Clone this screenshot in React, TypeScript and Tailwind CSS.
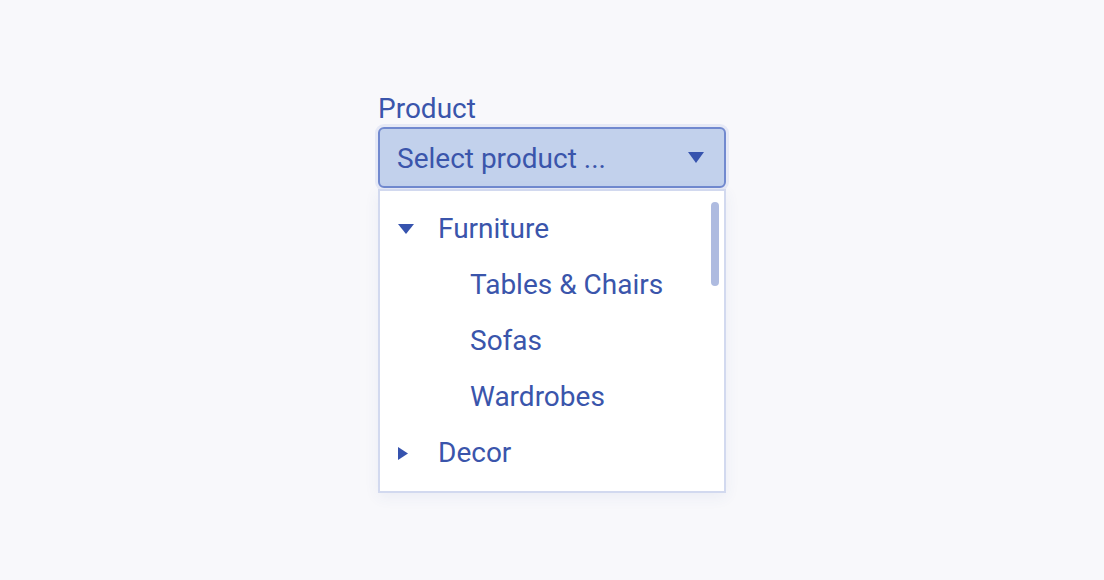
import React from "react";

const font = { fontFamily: "Roboto, 'Noto Sans', sans-serif" };

function Caret({ open }: { open: boolean }) {
  return open ? (
    <svg width="16" height="10" viewBox="0 0 16 10" className="shrink-0">
      <path d="M0 0H16L8 10Z" fill="#3653ae" />
    </svg>
  ) : (
    <svg width="10" height="13" viewBox="0 0 10 13" className="shrink-0">
      <path d="M0 0L10 6.5L0 13Z" fill="#3653ae" />
    </svg>
  );
}

const rows = [
  { label: "Furniture", group: true, open: true },
  { label: "Tables & Chairs" },
  { label: "Sofas" },
  { label: "Wardrobes" },
  { label: "Decor", group: true, open: false },
];

export default function App() {
  return (
    <div
      className="min-h-[580px] w-full bg-[#f8f8fb] flex justify-center pt-[93px] text-[#3a55ab]"
      style={font}
    >
      <div className="w-[348px] flex flex-col">
        <label className="text-[28px] leading-[32px]">Product</label>
        <button className="mt-[2px] h-[61px] flex items-center justify-between pl-[17px] pr-[20px] pt-[2px] rounded-[6px] border-2 border-[#7189cf] bg-[#c2d1ec] shadow-[0_0_0_3px_#e6e9f6] text-[28px] text-[#3a55ab]">
          <span>Select product ...</span>
          <svg width="16" height="11" viewBox="0 0 16 11" className="-mt-[2px]">
            <path d="M0 0H16L8 11Z" fill="#3653ae" />
          </svg>
        </button>
        <div className="relative mt-px border-2 border-[#d2d9ef] bg-white py-[10px] shadow-[0_4px_14px_rgba(60,80,150,0.07)]">
          <ul>
            {rows.map((r) =>
              r.group ? (
                <li key={r.label} className="h-[56px] flex items-center text-[28px]">
                  <span className="w-[58px] pl-[18px] flex items-center">
                    <Caret open={!!r.open} />
                  </span>
                  <span>{r.label}</span>
                </li>
              ) : (
                <li key={r.label} className="h-[56px] flex items-center pl-[90px] text-[28px]">
                  {r.label}
                </li>
              )
            )}
          </ul>
          <div className="absolute right-[5px] top-[11px] w-[8px] h-[84px] rounded-full bg-[#aebbe0]" />
        </div>
      </div>
    </div>
  );
}
